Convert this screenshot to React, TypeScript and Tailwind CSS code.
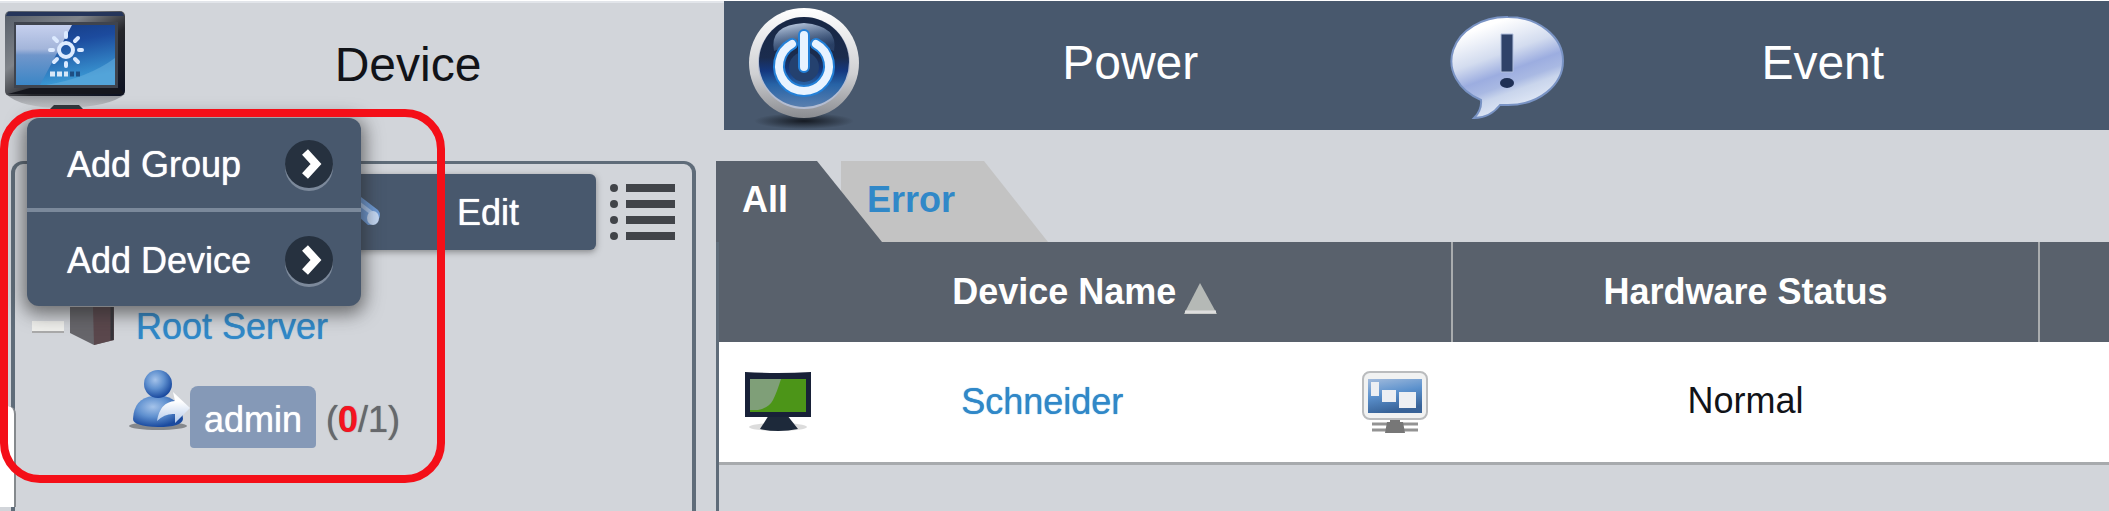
import React from "react";

function MonitorIcon() {
  return (
    <svg className="h-28 w-[124px] overflow-visible" viewBox="0 0 124 112" aria-hidden="true">
      <defs>
        <linearGradient id="frame" x1="0" y1="0" x2="1" y2="1">
          <stop offset="0" stopColor="#555d68" />
          <stop offset="0.35" stopColor="#80848a" />
          <stop offset="0.6" stopColor="#25262b" />
          <stop offset="1" stopColor="#0c1122" />
        </linearGradient>
        <linearGradient id="screen" x1="0" y1="0" x2="0.3" y2="1">
          <stop offset="0" stopColor="#153a80" />
          <stop offset="0.4" stopColor="#1c4b9e" />
          <stop offset="1" stopColor="#3a97d3" />
        </linearGradient>
        <linearGradient id="glare" x1="0" y1="0" x2="0" y2="1">
          <stop offset="0" stopColor="#c6d0ee" />
          <stop offset="0.4" stopColor="#a3b5da" />
          <stop offset="0.5" stopColor="#7096cb" />
          <stop offset="1" stopColor="#3b86c6" />
        </linearGradient>
        <linearGradient id="chin" x1="0" y1="0" x2="0" y2="1">
          <stop offset="0" stopColor="#8e9196" />
          <stop offset="1" stopColor="#c4c6ca" />
        </linearGradient>
      </defs>
      <path d="M6 94 Q20 108 64 108 Q110 107 125 94Z" fill="url(#chin)" />
      <path d="M54 105h25l6 6H48z" fill="#33373c" />
      <rect x="5" y="11" width="120" height="85" rx="5" fill="url(#frame)" />
      <path d="M8 12h114l2 4H6z" fill="#25355a" />
      <path d="M30 88h90l4 6H8z" fill="#15161d" />
      <rect x="14" y="22" width="104" height="66" fill="#3f444e" />
      <rect x="16" y="25" width="99" height="60" fill="url(#screen)" />
      <path d="M16 25h56L40 85H16z" fill="url(#glare)" />
      <path d="M46 85Q88 78 115 58v27z" fill="#6bb2df" opacity="0.5" />
      <g stroke="#dceaff" strokeWidth="4" strokeLinecap="round" fill="none">
        <circle cx="66" cy="50" r="7" />
        <path d="M66 33v4M66 63v3M50 50h3M79 50h3M54 38l3 3M75 59l3 3M78 38l-3 3M57 59l-3 3" />
      </g>
      <path d="M50 74h18" stroke="#d7e8f8" strokeWidth="5" strokeDasharray="5 2" />
      <path d="M70 74h11" stroke="#1d4e83" strokeWidth="5" strokeDasharray="4 2" />
    </svg>
  );
}

function PowerIcon() {
  return (
    <svg className="h-full w-full" viewBox="0 0 140 130" aria-hidden="true">
      <defs>
        <linearGradient id="ring" x1="0" y1="0" x2="0" y2="1">
          <stop offset="0" stopColor="#ffffff" />
          <stop offset="0.6" stopColor="#cfd0d3" />
          <stop offset="1" stopColor="#898b90" />
        </linearGradient>
        <linearGradient id="orb" x1="0" y1="0" x2="0" y2="1">
          <stop offset="0" stopColor="#172744" />
          <stop offset="0.45" stopColor="#1b2c4e" />
          <stop offset="0.6" stopColor="#14387f" />
          <stop offset="0.75" stopColor="#2763a6" />
          <stop offset="1" stopColor="#597faf" />
        </linearGradient>
        <linearGradient id="shine" x1="0" y1="0" x2="0.4" y2="1">
          <stop offset="0" stopColor="#d5e3f6" />
          <stop offset="1" stopColor="#4c6f9f" stopOpacity="0.3" />
        </linearGradient>
        <radialGradient id="floor">
          <stop offset="0" stopColor="#151a22" />
          <stop offset="1" stopColor="#151a22" stopOpacity="0" />
        </radialGradient>
      </defs>
      <ellipse cx="80" cy="120" rx="50" ry="8" fill="url(#floor)" />
      <circle cx="80" cy="62" r="55" fill="url(#ring)" />
      <circle cx="80" cy="62" r="46" fill="#b4bdd2" />
      <circle cx="80" cy="61" r="45" fill="url(#orb)" />
      <path d="M50 50Q45 24 80 22Q115 25 110 50Q82 37 50 50z" fill="url(#shine)" />
      <circle cx="80" cy="66" r="15" fill="#24416f" />
      <g fill="none" strokeLinecap="round">
        <path d="M68 43a25 25 0 1 0 24 0M80 34v32" stroke="#2380d8" strokeWidth="12" />
        <path d="M68 43a25 25 0 1 0 24 0M80 34v32" stroke="#e8f3ff" strokeWidth="8" />
      </g>
    </svg>
  );
}

function EventIcon() {
  return (
    <svg className="h-full w-full overflow-visible" viewBox="0 0 140 130" aria-hidden="true">
      <defs>
        <linearGradient id="bubble" x1="0.25" y1="0" x2="0.65" y2="1">
          <stop offset="0.1" stopColor="#ffffff" />
          <stop offset="0.38" stopColor="#d3dcef" />
          <stop offset="0.55" stopColor="#9cade0" />
          <stop offset="0.66" stopColor="#a9b9e3" />
          <stop offset="0.74" stopColor="#c9d5ec" />
          <stop offset="1" stopColor="#eef3fb" />
        </linearGradient>
      </defs>
      <path
        d="M91 16a55 44 0 0 1 0 88q-3 0-8 0q-10 13-26 13q8-8 7-18a55 44 0 0 1 27-83z"
        fill="url(#bubble)"
        stroke="#7993c4"
        strokeWidth="2"
      />
      <path d="M84 33h12v38H84z" fill="#2f4269" stroke="#b2c0df" strokeWidth="1" />
      <ellipse cx="90" cy="82" rx="7" ry="5" fill="#1f3055" />
    </svg>
  );
}

function ArrowBadge() {
  return (
    <svg className="h-[52px] w-[52px]" viewBox="0 0 52 52" aria-hidden="true">
      <circle cx="26" cy="28" r="24" fill="#7c899b" />
      <circle cx="26" cy="25" r="24" fill="#26313f" />
      <path d="M22 13l11 12-11 12" fill="none" stroke="#fff" strokeWidth="8" />
    </svg>
  );
}

function PencilIcon() {
  return (
    <svg className="h-14 w-14" viewBox="0 0 56 56" aria-hidden="true">
      <path d="M0 2L20 0l34 26q4 5 0 10t-10 5z" fill="#6f9bd6" />
      <path d="M20 8l29 22" stroke="#a9c6ee" strokeWidth="4" />
      <ellipse cx="49" cy="34" rx="6" ry="7" fill="#c5d8f4" />
    </svg>
  );
}

function ListIcon() {
  return (
    <svg className="h-[60px] w-[68px]" viewBox="0 0 68 60" fill="#414449" aria-hidden="true">
      <circle cx="6" cy="6" r="4" />
      <circle cx="6" cy="22" r="4" />
      <circle cx="6" cy="38" r="4" />
      <circle cx="6" cy="54" r="4" />
      <path d="M18 2h49v8H18zM18 18h49v8H18zM18 34h49v8H18zM18 50h49v8H18z" />
    </svg>
  );
}

function ServerIcon() {
  return (
    <svg className="h-10 w-11" viewBox="0 0 44 40" aria-hidden="true">
      <path d="M0 0h44v33l-20 5L0 26z" fill="#66656a" />
      <path d="M23 0h21v33l-20 5z" fill="#5a474c" />
      <path d="M42 0v33" stroke="#35343a" strokeWidth="3" />
    </svg>
  );
}

function UserIcon() {
  return (
    <svg className="h-[62px] w-[61px]" viewBox="0 0 61 62" aria-hidden="true">
      <defs>
        <radialGradient id="person" cx="0.4" cy="0.35" r="0.65">
          <stop offset="0" stopColor="#a5c3ea" />
          <stop offset="0.5" stopColor="#5f90cf" />
          <stop offset="1" stopColor="#1a4a9f" />
        </radialGradient>
        <linearGradient id="pointer" x1="0" y1="0" x2="0" y2="1">
          <stop offset="0.3" stopColor="#ffffff" />
          <stop offset="1" stopColor="#b4caea" />
        </linearGradient>
      </defs>
      <ellipse cx="29" cy="57" rx="29" ry="4" fill="#85888c" />
      <path d="M4 50Q5 29 24 27h11Q53 31 54 50Q53 58 29 58Q4 57 4 50z" fill="url(#person)" />
      <circle cx="29" cy="15" r="14" fill="url(#person)" />
      <path d="M44 23l17 16-15 15v-9q-10-1-18 7q3-19 18-20z" fill="url(#pointer)" />
    </svg>
  );
}

function GreenScreenIcon() {
  return (
    <svg className="h-16 w-[66px]" viewBox="0 0 66 64" aria-hidden="true">
      <ellipse cx="33" cy="57" rx="29" ry="4" fill="#dcdcdc" />
      <path d="M24 45h18l11 14q-20 4-38 0z" fill="#1d293a" />
      <path d="M0 2q33 2 66 0v45H0z" fill="#182138" />
      <path d="M5 9h56v33H5z" fill="#4c9518" />
      <path d="M5 9h31q-4 13-8 21-4 8-15 10H5z" fill="#7f9f78" />
    </svg>
  );
}

function RemoteScreenIcon() {
  return (
    <svg className="h-16 w-[66px]" viewBox="0 0 66 64" aria-hidden="true">
      <defs>
        <linearGradient id="remote" x1="0" y1="0" x2="0.3" y2="1">
          <stop offset="0" stopColor="#a2bbdc" />
          <stop offset="0.5" stopColor="#5b91cd" />
          <stop offset="1" stopColor="#386398" />
        </linearGradient>
      </defs>
      <path d="M10 54h46M10 60h46" stroke="#939393" strokeWidth="3" />
      <path d="M28 48h10v4h3l2 11H23l2-11h3z" fill="#777" />
      <rect x="1" y="2" width="64" height="47" rx="7" fill="#f1f2f2" stroke="#babcbe" strokeWidth="2" />
      <rect x="6" y="9" width="54" height="34" fill="url(#remote)" />
      <path d="M9 12h8v14H9zM20 20h14v12H20zM37 22h17v16H37z" fill="#eceff3" />
    </svg>
  );
}

const menuItems = ["Add Group", "Add Device"];

function DeviceMenu() {
  return (
    <div className="absolute left-[27px] top-[118px] z-20 w-[334px] divide-y-4 divide-[#7b899b] overflow-hidden rounded-xl bg-[#48586d] shadow-[0_4px_18px_4px_rgba(40,40,40,0.6)]">
      {menuItems.map((item) => (
        <button
          key={item}
          className="flex h-[94px] w-full items-center justify-between pl-10 pr-[26px] pt-1 text-left text-white [text-shadow:0_0_1px_#fff]"
        >
          {item}
          <ArrowBadge />
        </button>
      ))}
    </div>
  );
}

function Header() {
  return (
    <header className="flex h-[130px] border-t border-white">
      <div className="flex w-[724px] shrink-0 border-t-2 border-[#e2e5ea] pr-8">
        <div className="-mt-[3px]">
          <MonitorIcon />
        </div>
        <h1 className="flex flex-1 items-center justify-center pb-1 text-5xl text-[#111318]">
          Device
        </h1>
      </div>
      <nav className="grid flex-1 grid-cols-2 bg-[#48586d] text-5xl text-white">
        <a href="#power" className="flex pr-5">
          <span className="w-[140px]">
            <PowerIcon />
          </span>
          <span className="flex flex-1 items-center justify-center pb-[6px]">Power</span>
        </a>
        <a href="#event" className="flex pr-5">
          <span className="w-[140px]">
            <EventIcon />
          </span>
          <span className="flex flex-1 items-center justify-center pb-[6px]">Event</span>
        </a>
      </nav>
    </header>
  );
}

function Sidebar() {
  return (
    <aside className="ml-[11px] mr-5 w-[685px] shrink-0 rounded-t-xl border-x-4 border-t-[3px] border-[#5f6c79]">
      <div className="flex items-center justify-end pr-4 pt-[10px]">
        <button className="flex h-[76px] w-[284px] items-center rounded-md bg-[#48586d] pl-3 text-white shadow-[0_2px_6px_rgba(60,60,60,0.5)] [text-shadow:0_0_1px_#fff]">
          <PencilIcon />
          <span className="flex-1 pt-[2px] text-center">Edit</span>
        </button>
        <button aria-label="List view" className="ml-3">
          <ListIcon />
        </button>
      </div>
      <ul className="pt-[51px]">
        <li>
          <div className="flex h-[52px] items-center pl-[17px]">
            <button aria-label="Collapse" className="h-3 w-8 border-b-2 border-[#aaa] bg-[#efefec]" />
            <span className="ml-[6px]">
              <ServerIcon />
            </span>
            <a href="#root" className="ml-[22px] text-[#3088c8] [text-shadow:0_0_1px_#3088c8]">
              Root Server
            </a>
          </div>
          <ul className="pl-[114px] pt-4">
            <li className="flex">
              <UserIcon />
              <a
                href="#admin"
                className="mt-[17px] flex h-[62px] items-center rounded-t-lg rounded-b-sm bg-[#8599b7] px-[14px] pt-[6px] text-white [text-shadow:0_0_1px_#fff]"
              >
                admin
              </a>
              <span className="ml-[10px] mt-[17px] flex h-[62px] items-center pt-[6px] text-[#66686c] [text-shadow:0_0_1px_#66686c]">
                (<b className="text-[#f51320]">0</b>/1)
              </span>
            </li>
          </ul>
        </li>
      </ul>
    </aside>
  );
}

function DeviceTable() {
  return (
    <section className="min-w-0 flex-1">
      <div className="flex h-[81px] font-bold">
        <button className="relative z-10 w-[166px] bg-[#59616c] pb-1 pl-[26px] text-left text-white [clip-path:polygon(0_0,101px_0,100%_100%,0_100%)]">
          All
        </button>
        <button className="-ml-[41px] w-[207px] bg-[#c3c3c3] pb-1 pl-[26px] text-left text-[#3088c8] [clip-path:polygon(0_0,143px_0,100%_100%,0_100%)]">
          Error
        </button>
      </div>
      <div className="min-h-[269px] border-l-[3px] border-[#5f6c79]">
        <table className="w-full table-fixed">
          <thead>
            <tr className="h-[100px] bg-[#59616c] text-white">
              <th className="w-[52.7%] border-r-2 border-[#a9acae]">
                <span className="flex items-center justify-center gap-2">
                  Device Name
                  <svg className="mt-3 h-[31px] w-[33px]" viewBox="0 0 33 31" aria-hidden="true">
                    <path d="M16 0l17 31H0z" fill="#b5b9b6" />
                    <path d="M1 29h31" stroke="#dedede" strokeWidth="3" />
                  </svg>
                </span>
              </th>
              <th className="w-[42.3%] border-r-2 border-[#a9acae]">Hardware Status</th>
              <th />
            </tr>
          </thead>
          <tbody>
            <tr className="h-[121px] border-b-[3px] border-[#a7aaad] bg-white">
              <td>
                <div className="flex items-center pl-[26px] pr-6">
                  <GreenScreenIcon />
                  <a
                    href="#schneider"
                    className="flex-1 pr-[88px] text-center text-[#3088c8] [text-shadow:0_0_1px_#3088c8]"
                  >
                    Schneider
                  </a>
                  <RemoteScreenIcon />
                </div>
              </td>
              <td className="pb-[2px] text-center text-[#111318]">Normal</td>
              <td />
            </tr>
          </tbody>
        </table>
      </div>
    </section>
  );
}

function App() {
  return (
    <div className="relative min-h-screen overflow-hidden bg-[#d2d5da] font-['Liberation_Sans',Arial,sans-serif] text-4xl">
      <Header />
      <main className="flex pt-[31px]">
        <Sidebar />
        <DeviceTable />
      </main>
      <DeviceMenu />
      <div className="absolute bottom-1 left-0 top-[406px] w-4 rounded-tr-lg border-r-2 border-[#85898d] bg-white" />
      <div className="pointer-events-none absolute left-0 top-[109px] z-30 h-[374px] w-[445px] rounded-[40px] border-8 border-[#f40f18]" />
    </div>
  );
}

export default App;
